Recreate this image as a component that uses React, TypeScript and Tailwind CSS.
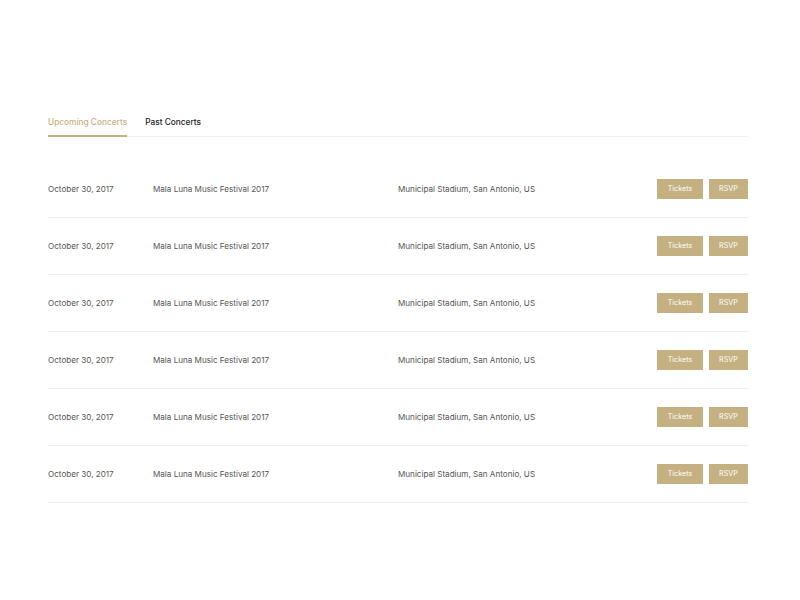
import React from "react";

const rows = Array.from({ length: 6 }, () => ({
  date: "October 30, 2017",
  name: "Mala Luna Music Festival 2017",
  place: "Municipal Stadium, San Antonio, US",
}));

export default function App() {
  return (
    <div
      className="w-[800px] h-[600px] bg-white"
      style={{ fontFamily: "Inter, 'Liberation Sans', Arial, sans-serif" }}
    >
      <div className="pt-[116px] ml-12 w-[700px]">
        <div className="flex gap-[18px] border-b border-[#f1f1f1] text-[8.3px] leading-[13px] font-medium">
          <div className="pb-[6px] border-b-2 border-[#c4b283] -mb-px text-[#c4b283]">
            Upcoming Concerts
          </div>
          <div className="pb-[6px] text-[#1a1a1a]">Past Concerts</div>
        </div>
        <div className="mt-[24px]">
          {rows.map((r, i) => (
            <div
              key={i}
              className="flex items-center h-[57px] border-b border-[#efefef] text-[8.1px] text-[#555] pt-px"
            >
              <div className="w-[105px]">{r.date}</div>
              <div className="w-[245px]">{r.name}</div>
              <div className="flex-1">{r.place}</div>
              <div className="flex gap-[6px] -mt-px">
                <button className="w-[46px] h-[20px] bg-[#c4b081] text-white text-[7.2px]">
                  Tickets
                </button>
                <button className="w-[39px] h-[20px] bg-[#c4b081] text-white text-[7.2px]">
                  RSVP
                </button>
              </div>
            </div>
          ))}
        </div>
      </div>
    </div>
  );
}
